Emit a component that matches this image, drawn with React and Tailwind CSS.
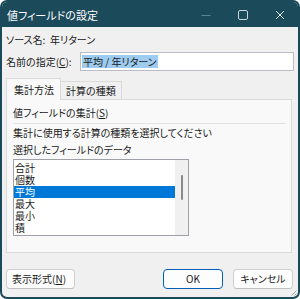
export default function App() {
  const items = ['合計', '個数', '平均', '最大', '最小', '積']
  const selected = '平均'

  return (
    <div className="w-[300px] h-[299px] bg-white font-['Noto_Sans_CJK_JP','Noto_Sans',sans-serif] [font-feature-settings:'palt'] text-[10px] leading-[12px] text-[#1a1a1a]">
      <div className="relative h-full flex flex-col border-2 border-[#1b4a5a] rounded-[7px] overflow-hidden bg-[#f0f0f0]">
        {/* Title bar */}
        <div className="h-[25px] shrink-0 flex items-center bg-[#1b4a5a] text-white">
          <span className="flex-1 pl-[5px] text-[11px] leading-[14px]">値フィールドの設定</span>
          <div className="w-[37px] h-full flex items-center justify-center">
            <svg width="10" height="10" viewBox="0 0 10 10">
              <path d="M0.5 5.5h9" stroke="#5f8492" strokeWidth="1" />
            </svg>
          </div>
          <div className="w-[37px] h-full flex items-center justify-center">
            <svg width="10" height="10" viewBox="0 0 10 10">
              <rect x="0.5" y="0.5" width="9" height="9" rx="1.5" fill="none" stroke="#c9d6db" strokeWidth="1" />
            </svg>
          </div>
          <div className="w-[37px] h-full flex items-center justify-center">
            <svg width="10" height="10" viewBox="0 0 10 10">
              <path d="M1 1l8 8M9 1l-8 8" stroke="#e6eef0" strokeWidth="1" />
            </svg>
          </div>
        </div>

        {/* Body */}
        <div className="flex-1 flex flex-col px-[4px]">
          <div className="mt-[7px] flex">
            <span className="w-[44px]">ソース名:</span>
            <span>年リターン</span>
          </div>

          <div className="mt-[6px] flex items-center">
            <span className="w-[74px]">
              名前の指定(<span className="underline">C</span>):
            </span>
            <div className="flex-1 h-[19px] flex items-center bg-white border border-[#bcbcc4] pl-[1px]">
              <span className="bg-[#9ecbf0] leading-[13px] px-[1px]">平均 / 年リターン</span>
            </div>
          </div>

          {/* Tabs */}
          <div className="mt-[7px] flex items-end relative z-10 mb-[-1px]">
            <div className="h-[22px] w-[55px] pl-[7px] pt-[5px] bg-[#f9f9f9] border-l border-t border-r border-[#dadada]">
              集計方法
            </div>
            <div className="h-[19px] w-[61px] pl-[5px] pt-[3px] bg-[#f0f0f0] border-t border-r border-b border-[#dadada]">
              計算の種類
            </div>
          </div>

          {/* Panel */}
          <div className="h-[154px] w-[286px] border border-[#dadada] bg-[#f9f9f9] px-[6px] pt-[7px]">
            <div>
              値フィールドの集計(<span className="underline">S</span>)
            </div>
            <div className="mt-[4px] h-px w-[273px] bg-[#e2e2e2]" />
            <div className="mt-[3px]">集計に使用する計算の種類を選択してください</div>
            <div className="mt-[5px]">選択したフィールドのデータ</div>
            <div className="mt-[3px] w-[176px] h-[77px] border border-[#a0a0a8] bg-white flex">
              <div className="flex-1 pt-[2px]">
                {items.map((it) => (
                  <div
                    key={it}
                    className={
                      it === selected
                        ? 'h-[12px] pl-[1px] bg-[#0078d7] text-white'
                        : 'h-[12px] pl-[1px]'
                    }
                  >
                    {it}
                  </div>
                ))}
              </div>
              <div className="w-[13px] bg-[#f0f0f0] flex justify-center pt-[15px]">
                <div className="w-[2px] h-[25px] bg-[#8a8a8a] rounded-full" />
              </div>
            </div>
          </div>

          {/* Buttons */}
          <div className="mt-[16px] flex items-center pr-[1px]">
            <button className="h-[20px] w-[69px] rounded-[4px] border border-[#d0d0d0] border-b-[#c0c0c0] bg-[#fdfdfd] text-left pl-[5px]">
              表示形式(<span className="underline">N</span>)
            </button>
            <button className="ml-auto h-[20px] w-[60px] rounded-[4px] border border-[#005fb8] bg-[#fdfdfd]">
              OK
            </button>
            <button className="ml-[10px] h-[20px] w-[60px] rounded-[4px] border border-[#d0d0d0] border-b-[#c0c0c0] bg-[#fdfdfd]">
              キャンセル
            </button>
          </div>
        </div>

        {/* Resize grip */}
        <svg className="absolute right-[1px] bottom-[1px]" width="7" height="7" viewBox="0 0 7 7">
          <path d="M6.5 1.5L1.5 6.5M6.5 4.5L4.5 6.5" stroke="#a8a8a8" strokeWidth="1" />
        </svg>
      </div>
    </div>
  )
}
